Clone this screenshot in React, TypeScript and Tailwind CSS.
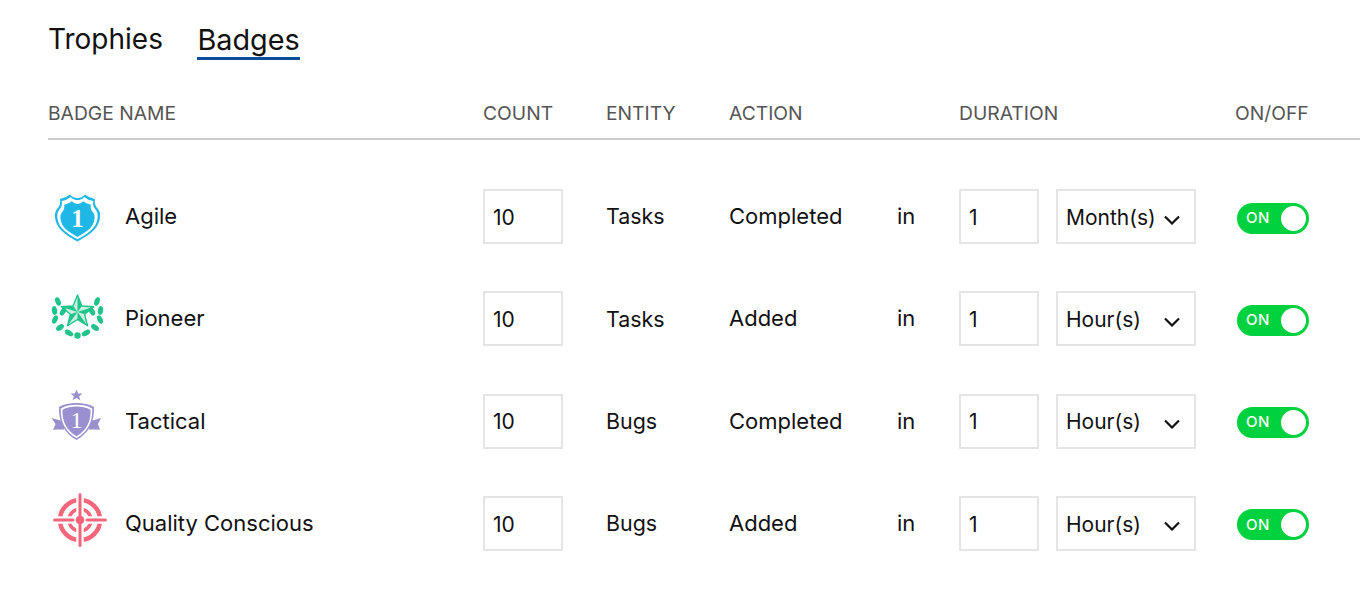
const FONT = "font-['Inter','Liberation_Sans',sans-serif]";

const SHIELD =
  "M37.5 17Q33 17 30 13.5Q26 17 20 18Q21 24 17 28Q14.5 31 15 36C16 49 28 55 37.5 60.5C47 55 59 49 60 36Q60.5 31 58 28Q54 24 55 18Q49 17 45 13.5Q42 17 37.5 17Z";

function AgileIcon() {
  return (
    <svg viewBox="12 10 52 52" className="h-[52px] w-[52px] shrink-0 overflow-visible">
      <path d={SHIELD} fill="#1eb7e6" />
      <path d={SHIELD} fill="#fff" transform="translate(37.5 37.5) scale(0.9) translate(-37.5 -37.5)" />
      <path d={SHIELD} fill="#1eb7e6" transform="translate(37.5 38.5) scale(0.76) translate(-37.5 -37.5)" />
      <text x="37.5" y="45.5" textAnchor="middle" fontSize="25" fontWeight="700" fill="#fff" fontFamily="Liberation Serif, serif">
        1
      </text>
    </svg>
  );
}

function starPoint(i: number, r: number) {
  const a = (-90 + i * 36) * (Math.PI / 180);
  return `${37.5 + r * Math.cos(a)},${31.5 + r * Math.sin(a)}`;
}

function PioneerIcon() {
  const leaves = [
    [18, 21, -20],
    [14.5, 30, -10],
    [15, 39, 25],
    [20, 47, 55],
    [57, 21, 20],
    [60.5, 30, 10],
    [60, 39, -25],
    [55, 47, -55],
    [23, 31, 30],
    [52, 31, -30],
  ];
  const outline = Array.from({ length: 10 }, (_, i) => starPoint(i, i % 2 === 0 ? 17 : 7.5)).join(" ");
  return (
    <svg viewBox="12 12.5 52 52" className="h-[52px] w-[52px] shrink-0 overflow-visible">
      <polygon points={outline} fill="#c9f0e1" stroke="#1fc48a" strokeWidth="1.4" strokeLinejoin="round" />
      {[0, 2, 4, 6, 8].map((i) => (
        <polygon key={i} points={`37.5,31.5 ${starPoint(i, 17)} ${starPoint(i + 1, 7.5)}`} fill="#1fc48a" />
      ))}
      {leaves.map(([x, y, r]) => (
        <ellipse key={`${x}-${y}`} cx={x} cy={y} rx="2.6" ry="4.4" fill="#1fc48a" transform={`rotate(${r} ${x} ${y})`} />
      ))}
      <ellipse cx="29" cy="52.5" rx="4.6" ry="2.6" fill="#1fc48a" transform="rotate(30 29 52.5)" />
      <ellipse cx="46" cy="52.5" rx="4.6" ry="2.6" fill="#1fc48a" transform="rotate(-30 46 52.5)" />
      <circle cx="37.5" cy="55" r="3.2" fill="#1fc48a" />
    </svg>
  );
}

function TacticalIcon() {
  const shield = "M36.5 23C43 23 49 24 54 27C54.5 42 49 53 36.5 60C24 53 18.5 42 19 27C24 24 30 23 36.5 23Z";
  return (
    <svg viewBox="12 15 52 52" className="h-[52px] w-[52px] shrink-0 overflow-visible">
      <polygon points="36.5,9.5 38.2,13.4 42.5,13.6 39.2,16.2 40.3,20.3 36.5,18 32.7,20.3 33.8,16.2 30.5,13.6 34.8,13.4" fill="#9b90cf" />
      <polygon points="11.5,38 24,41.5 24,49.5 16,49.5 13,50 15.5,44" fill="#9b90cf" />
      <polygon points="61,38 49,41.5 49,49.5 57,49.5 60,50 58,44" fill="#9b90cf" />
      <path d={shield} fill="#9b90cf" />
      <path d={shield} fill="#fff" transform="translate(36.5 41) scale(0.9) translate(-36.5 -41)" />
      <path d={shield} fill="#9b90cf" transform="translate(36.5 41) scale(0.8) translate(-36.5 -41)" />
      <text x="36.5" y="48" textAnchor="middle" fontSize="24" fill="#fff" fontFamily="Liberation Serif, serif">
        1
      </text>
    </svg>
  );
}

function QualityIcon() {
  return (
    <svg viewBox="12 12 52 52" className="h-[52px] w-[52px] shrink-0 overflow-visible" fill="none" stroke="#f4677a">
      <circle cx="40" cy="35" r="20" strokeWidth="4.5" />
      <circle cx="40" cy="35" r="11" strokeWidth="3.5" />
      <path d="M40 8V62M13 35H67" stroke="#fff" strokeWidth="7.5" />
      <path d="M40 9.5V30M40 40V60.5M14.5 35H33M47 35H65.5" strokeWidth="3" strokeLinecap="round" />
      <circle cx="40" cy="35" r="4.4" fill="#f4677a" stroke="none" />
    </svg>
  );
}

function Toggle() {
  return (
    <div className="mt-[3px] flex h-[31px] w-[72px] items-center justify-between rounded-full bg-[#00d13f] pl-[9px] pr-[3px]">
      <span className="text-[15px] font-medium tracking-[0.5px] text-white">ON</span>
      <span className="h-[25px] w-[25px] rounded-full bg-white" />
    </div>
  );
}

const rows = [
  { icon: <AgileIcon />, name: "Agile", entity: "Tasks", action: "Completed", unit: "Month(s)" },
  { icon: <PioneerIcon />, name: "Pioneer", entity: "Tasks", action: "Added", unit: "Hour(s)" },
  { icon: <TacticalIcon />, name: "Tactical", entity: "Bugs", action: "Completed", unit: "Hour(s)" },
  { icon: <QualityIcon />, name: "Quality Conscious", entity: "Bugs", action: "Added", unit: "Hour(s)" },
];

const columns = "grid grid-cols-[435px_123px_123px_168px_62px_97px_179px_1fr] items-center";
const box = "flex h-[55px] items-center border-2 border-[#e5e5e5] pl-2 pt-[2px] text-[21px]";

export default function App() {
  return (
    <div className={`${FONT} h-[599px] w-[1360px] overflow-hidden bg-white pl-12 text-[22px] text-[#111]`}>
      {/* Tabs */}
      <div className="flex gap-[34.5px] pt-[22px] leading-[35px]">
        <span className="text-[28px]">Trophies</span>
        <span className="border-b-[3px] border-[#0b4f9c] text-[28.8px]">Badges</span>
      </div>

      {/* Cabecera */}
      <div className={`${columns} mt-[39px] h-[41px] border-b-2 border-[#ccc] pb-[14px] text-[19.3px] text-[#555]`}>
        <span>BADGE NAME</span>
        <span>COUNT</span>
        <span>ENTITY</span>
        <span>ACTION</span>
        <span />
        <span className="col-span-2">DURATION</span>
        <span>ON/OFF</span>
      </div>

      <div className="mt-[49px] flex flex-col gap-[47.33px]">
        {rows.map((row) => (
          <div key={row.name} className={columns}>
            <div className="flex items-center gap-[21px] pl-1">
              {row.icon}
              <span>{row.name}</span>
            </div>
            <div className={`${box} w-[80px]`}>10</div>
            <span className="text-[21.4px]">{row.entity}</span>
            <span>{row.action}</span>
            <span>in</span>
            <div className={`${box} w-[80px]`}>1</div>
            <div className={`${box} w-[140px] justify-between pr-[14px]`}>
              <span>{row.unit}</span>
              <svg viewBox="0 0 16 10" fill="none" stroke="#111" strokeWidth="2.2" className="mt-1 h-[10px] w-[16px]">
                <path d="M1 1.5L8 8.5L15 1.5" />
              </svg>
            </div>
            <div className="pl-[2px]">
              <Toggle />
            </div>
          </div>
        ))}
      </div>
    </div>
  );
}
